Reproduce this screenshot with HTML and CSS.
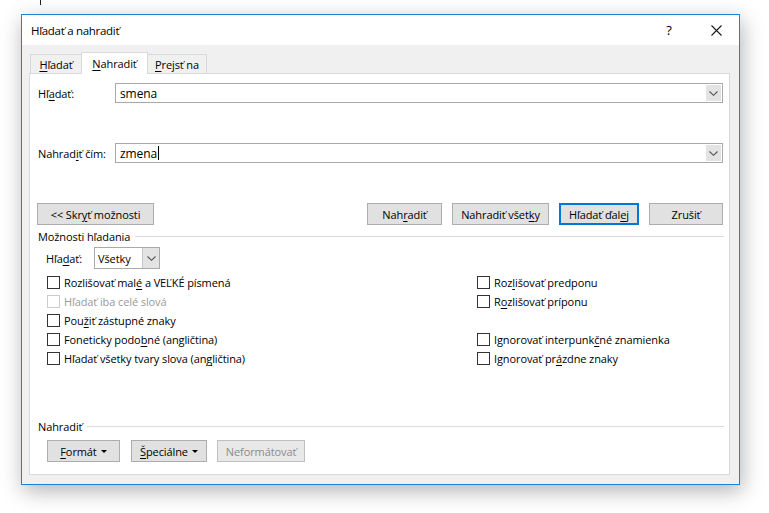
FILE: index.html
```html
<!DOCTYPE html>
<html lang="sk">
<head>
    <meta charset="UTF-8">
    <title>Hľadať a nahradiť</title>
    <link rel="stylesheet" href="styles.css">
</head>
<body>
    <div class="cursor-mark"></div>
    <div class="window">
        <div class="titlebar">
            <span class="title">Hľadať a nahradiť</span>
            <span class="help">?</span>
            <span class="close">
                <svg width="11" height="11" viewBox="0 0 11 11"><path d="M0.5 0.5 L10.5 10.5 M10.5 0.5 L0.5 10.5" stroke="#1a1a1a" stroke-width="1.1" fill="none"/></svg>
            </span>
        </div>
        <div class="body">
            <div class="tabs">
                <div class="tab tab-find"><span><u>H</u>ľadať</span></div>
                <div class="tab active tab-replace"><span><u>N</u>ahradiť</span></div>
                <div class="tab tab-goto"><span><u>P</u>rejsť na</span></div>
            </div>
            <div class="panel">
                <div class="field">
                    <label class="field-label">Hľ<u>a</u>dať:</label>
                    <div class="combo">
                        <div class="combo-text">smena</div>
                        <div class="combo-btn"><svg width="9" height="5" viewBox="0 0 9 5"><path d="M0.5 0.5 L4.5 4.3 L8.5 0.5" stroke="#555" stroke-width="1.1" fill="none"/></svg></div>
                    </div>
                </div>
                <div class="field field-replace">
                    <label class="field-label">Nahrad<u>i</u>ť čím:</label>
                    <div class="combo">
                        <div class="combo-text"><span>zmena</span><span class="caret"></span></div>
                        <div class="combo-btn"><svg width="9" height="5" viewBox="0 0 9 5"><path d="M0.5 0.5 L4.5 4.3 L8.5 0.5" stroke="#555" stroke-width="1.1" fill="none"/></svg></div>
                    </div>
                </div>

                <div class="button-row">
                    <button class="btn btn-less"><span>&lt;&lt; Skr<u>y</u>ť možnosti</span></button>
                    <div class="button-group">
                        <button class="btn w-replace"><span>Nah<u>r</u>adiť</span></button>
                        <button class="btn w-all"><span>Nahradiť všet<u>k</u>y</span></button>
                        <button class="btn btn-default w-next"><span>Hľadať ďal<u>e</u>j</span></button>
                        <button class="btn w-cancel"><span>Zrušiť</span></button>
                    </div>
                </div>

                <div class="group-title"><span>Možnosti hľadania</span></div>
                <div class="options">
                    <div class="search-row">
                        <span class="search-label">Hľa<u>d</u>ať:</span>
                        <div class="select">
                            <div class="select-text">Všetky</div>
                            <div class="select-btn"><svg width="9" height="5" viewBox="0 0 9 5"><path d="M0.5 0.5 L4.5 4.3 L8.5 0.5" stroke="#555" stroke-width="1.1" fill="none"/></svg></div>
                        </div>
                    </div>
                    <div class="checks">
                        <div class="check"><span class="box"></span><span>Rozlišovať mal<u>é</u> a VEĽKÉ písmená</span></div>
                        <div class="check"><span class="box"></span><span>Roz<u>l</u>išovať predponu</span></div>
                        <div class="check disabled"><span class="box"></span><span>Hľadať iba celé slová</span></div>
                        <div class="check"><span class="box"></span><span>R<u>o</u>zlišovať príponu</span></div>
                        <div class="check"><span class="box"></span><span>Pou<u>ž</u>iť zástupné znaky</span></div>
                        <div></div>
                        <div class="check"><span class="box"></span><span>Foneticky podo<u>b</u>né (angličtina)</span></div>
                        <div class="check"><span class="box"></span><span>Ignorovať interpunk<u>č</u>né znamienka</span></div>
                        <div class="check"><span class="box"></span><span>Hľadať všetky tvary slova (an<u>g</u>ličtina)</span></div>
                        <div class="check"><span class="box"></span><span>Ignorovať pr<u>á</u>zdne znaky</span></div>
                    </div>
                </div>

                <div class="group-title group-replace"><span>Nahradiť</span></div>
                <div class="format-row">
                    <button class="btn w-format"><span><u>F</u>ormát</span><span class="arrow"></span></button>
                    <button class="btn w-special"><span><u>Š</u>peciálne</span><span class="arrow"></span></button>
                    <button class="btn w-noformat" disabled><span>Neformátovať</span></button>
                </div>
            </div>
        </div>
    </div>
</body>
</html>
```

FILE: styles.css
```css
html { background: #fff; }
body { margin: 0; padding-bottom: 28px; font-family: "Open Sans", "Noto Sans", sans-serif; font-size: 11px; letter-spacing: -0.1px; color: #000; }
u { text-decoration: underline; text-underline-offset: 2px; }

/* little bit of the document behind the dialog */
.cursor-mark { position: absolute; left: 40px; top: 0; width: 1px; height: 5px; background: #222; }

.window { margin: 14px 0 0 21px; width: 719px; height: 471px; box-sizing: border-box; border: 1px solid #1883d7; background: #f0f0f0; box-shadow: 2px 6px 20px rgba(0, 0, 0, 0.3); display: flex; flex-direction: column; }

.titlebar { height: 30px; background: #fff; display: flex; align-items: center; padding-left: 9px; }
.title { flex: 1; font-size: 11.5px; letter-spacing: -0.3px; }
.help { font-size: 13px; width: 44px; text-align: center; margin-right: 2px; }
.close { width: 46px; display: flex; justify-content: center; }

.body { flex: 1; padding: 7px 9px 0 7px; }

.tabs { display: flex; align-items: flex-end; height: 21px; padding-left: 1px; position: relative; z-index: 1; }
.tab { height: 19px; box-sizing: border-box; border: 1px solid #d9d9d9; border-bottom: none; background: #f0f0f0; display: flex; align-items: center; justify-content: center; }
.tab.active { height: 22px; margin-bottom: -1px; background: #fff; }
.tab-find { width: 51px; border-right: none; }
.tab-replace { width: 67px; }
.tab-goto { width: 59px; border-left: none; }

.panel { height: 402px; box-sizing: border-box; border: 1px solid #d9d9d9; background: #fff; padding: 9px 6px 0 7px; }

.field { display: flex; align-items: center; height: 20px; }
.field-replace { margin-top: 40px; }
.field-label { width: 77px; padding-left: 1px; }
.combo { flex: 1; height: 20px; box-sizing: border-box; border: 1px solid #a9a9a9; display: flex; }
.combo-text { flex: 1; padding-left: 4px; font-size: 12px; display: flex; align-items: center; }
.caret { display: inline-block; width: 1px; height: 14px; background: #000; margin-left: 1px; }
.combo-btn { width: 15px; margin: 1px; background: #e3e3e3; display: flex; align-items: center; justify-content: center; }

.button-row { margin-top: 40px; display: flex; justify-content: space-between; }
.button-group { display: flex; gap: 10px; }
.btn { height: 22px; box-sizing: border-box; border: 1px solid #adadad; background: #e1e1e1; font-family: inherit; font-size: 11px; letter-spacing: -0.1px; color: #000; padding: 0; display: flex; align-items: center; justify-content: center; }
.btn-default { border: 2px solid #0078d7; }
.btn:disabled { color: #8c8c8c; border-color: #bfbfbf; background: #e8e8e8; }
.btn-less { width: 117px; }
.w-replace { width: 75px; }
.w-all { width: 97px; }
.w-next { width: 80px; }
.w-cancel { width: 74px; }

.group-title { margin-top: 4px; height: 14px; display: flex; align-items: center; padding-left: 1px; }
.group-title::after { content: ""; flex: 1; height: 1px; background: #dcdcdc; margin-left: 5px; margin-right: -1px; }
.group-replace { margin-top: 51px; }

.options { padding-left: 9px; }
.search-row { margin-top: 4px; display: flex; align-items: center; height: 22px; }
.search-label { width: 48px; }
.select { width: 66px; height: 22px; box-sizing: border-box; border: 1px solid #a9a9a9; display: flex; }
.select-text { flex: 1; padding-left: 3px; display: flex; align-items: center; }
.select-btn { width: 16px; background: #e3e3e3; border-left: 1px solid #c8c8c8; display: flex; align-items: center; justify-content: center; }

.checks { margin-top: 4px; padding-left: 1px; display: grid; grid-template-columns: 430px auto; grid-auto-rows: 19px; }
.check { display: flex; align-items: center; gap: 4px; }
.box { width: 13px; height: 13px; box-sizing: border-box; border: 1px solid #333; background: #fff; }
.check.disabled { color: #9a9a9a; }
.check.disabled .box { border-color: #cccccc; }

.format-row { margin-top: 7px; padding-left: 10px; display: flex; gap: 11px; }
.w-format { width: 73px; }
.w-special { width: 76px; margin-right: -1px; }
.w-noformat { width: 88px; }
.arrow { display: inline-block; width: 0; height: 0; border-left: 3px solid transparent; border-right: 3px solid transparent; border-top: 3px solid #000; margin-left: 4px; }
```
